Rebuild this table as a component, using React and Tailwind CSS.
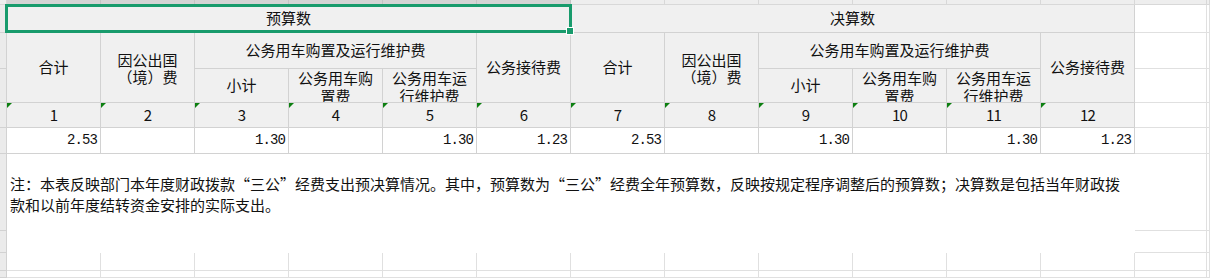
import React from "react";

const CJK = "font-['Noto_Sans_CJK_SC',sans-serif]";
const MONO = "font-['Liberation_Mono',monospace]";

const H = "bg-[#f0f0f0] border-r border-b border-[#d2d2d2] text-[15px] text-[#111] " + CJK;
const CENTER = "flex items-center justify-center text-center";

function Tri() {
  return (
    <span className="absolute left-0 top-0 w-0 h-0 border-t-[5px] border-r-[5px] border-t-[#0c7f10] border-r-transparent" />
  );
}

const colStart = [
  "col-start-2", "col-start-3", "col-start-4", "col-start-5", "col-start-6", "col-start-7",
  "col-start-8", "col-start-9", "col-start-10", "col-start-11", "col-start-12", "col-start-13",
];

const data = ["2.53", "", "1.30", "", "1.30", "1.23", "2.53", "", "1.30", "", "1.30", "1.23"];

function HeaderGroup({ offset }) {
  const c = (i) => colStart[offset + i];
  return (
    <>
      <div className={`${H} ${CENTER} ${c(0)} row-start-3 row-span-2`}>合计</div>
      <div className={`${H} ${CENTER} ${c(1)} row-start-3 row-span-2 leading-[17px]`}>
        因公出国
        <br />
        （境）费
      </div>
      <div className={`${H} ${CENTER} ${c(2)} col-span-3 row-start-3`}>公务用车购置及运行维护费</div>
      <div className={`${H} ${CENTER} ${c(5)} row-start-3 row-span-2`}>公务接待费</div>
      <div className={`${H} ${CENTER} ${c(2)} row-start-4`}>小计</div>
      <div className={`${H} ${c(3)} row-start-4 overflow-hidden text-center leading-[18px]`}>
        公务用车购
        <br />
        置费
      </div>
      <div className={`${H} ${c(4)} row-start-4 overflow-hidden text-center leading-[18px]`}>
        公务用车运
        <br />
        行维护费
      </div>
    </>
  );
}

export default function App() {
  const stripDark = "bg-[#d4d4d4] border-r border-b border-[#c4c4c4] row-start-1";
  const stripLight = "bg-[#eeeeee] border-r border-b border-[#d8d8d8] row-start-1";
  const gut = "col-start-1 bg-[#ebebeb] border-r border-b border-[#d2d2d2]";
  const grid = "bg-white border-r border-b border-[#e0e0e0]";

  return (
    <div className="relative w-[1210px] h-[278px] overflow-hidden bg-white">
      <div className="grid w-[1210px] h-[278px] grid-cols-[7px_repeat(12,94px)_72px_1fr] grid-rows-[5px_28px_36px_34px_25px_26px_77px_22px_18px_1fr]">
        {/* column header strip */}
        <div className={`col-start-1 ${stripLight}`} />
        {colStart.map((cs, i) => (
          <div key={"s" + i} className={`${cs} ${i < 6 ? stripDark : stripLight}`} />
        ))}
        <div className={`col-start-14 ${stripLight}`} />
        <div className={`col-start-15 ${stripLight}`} />

        {/* row gutter */}
        <div className={`${gut} row-start-2 bg-[#d8d8d8]`} />
        <div className={`${gut} row-start-3`} />
        <div className={`${gut} row-start-4`} />
        <div className={`${gut} row-start-5`} />
        <div className={`${gut} row-start-6`} />
        <div className={`${gut} row-start-7`} />
        <div className={`${gut} row-start-8`} />
        <div className={`${gut} row-start-9`} />
        <div className={`${gut} row-start-10`} />

        {/* row 1 */}
        <div className={`${H} ${CENTER} col-start-2 col-span-6 row-start-2`}>预算数</div>
        <div className={`${H} ${CENTER} col-start-8 col-span-6 row-start-2`}>决算数</div>

        {/* rows 2-3 */}
        <HeaderGroup offset={0} />
        <HeaderGroup offset={6} />

        {/* row 4: index numbers */}
        {colStart.map((cs, i) => (
          <div
            key={"n" + i}
            className={`${H} ${CENTER} ${cs} row-start-5 relative ${MONO} text-[14px] tracking-[-0.9px]`}
          >
            <Tri />
            {i + 1}
          </div>
        ))}

        {/* row 5: data */}
        {colStart.map((cs, i) => (
          <div
            key={"d" + i}
            className={`bg-white border-r border-b border-[#d2d2d2] ${cs} row-start-6 flex items-center justify-end pr-[3px] ${MONO} text-[14px] tracking-[-0.9px] text-[#111]`}
          >
            {data[i]}
          </div>
        ))}

        {/* note */}
        <div
          className={`col-start-2 col-span-12 row-start-7 row-span-2 bg-white pl-[3px] pt-[19px] leading-[21px] text-[15px] text-[#111] whitespace-nowrap ${CJK}`}
        >
          注：本表反映部门本年度财政拨款“三公”经费支出预决算情况。其中，预算数为“三公”经费全年预算数，反映按规定程序调整后的预算数；决算数是包括当年财政拨
          <br />
          款和以前年度结转资金安排的实际支出。
        </div>

        {/* column M and beyond */}
        <div className={`${grid} col-start-14 row-start-2`} />
        <div className={`${grid} col-start-14 row-start-3`} />
        <div className={`${grid} col-start-14 row-start-4`} />
        <div className={`${grid} col-start-14 row-start-5`} />
        <div className={`${grid} col-start-14 row-start-6`} />
        <div className={`${grid} col-start-14 row-start-7`} />
        <div className={`${grid} col-start-14 row-start-8`} />
        <div className={`${grid} col-start-15 row-start-2`} />
        <div className={`${grid} col-start-15 row-start-3`} />
        <div className={`${grid} col-start-15 row-start-4`} />
        <div className={`${grid} col-start-15 row-start-5`} />
        <div className={`${grid} col-start-15 row-start-6`} />
        <div className={`${grid} col-start-15 row-start-7`} />
        <div className={`${grid} col-start-15 row-start-8`} />

        {/* bottom rows */}
        {[...colStart, "col-start-14", "col-start-15"].map((cs, i) => (
          <React.Fragment key={"b" + i}>
            <div className={`${grid} ${cs} row-start-9`} />
            <div className={`${grid} ${cs} row-start-10`} />
          </React.Fragment>
        ))}
      </div>

      {/* selection box */}
      <div className="absolute left-[5px] top-[4px] w-[567px] h-[29px] border-[3px] border-[#189b6c] pointer-events-none" />
      <div className="absolute left-[566px] top-[27px] w-[8px] h-[8px] bg-[#189b6c] border border-white" />
    </div>
  );
}
